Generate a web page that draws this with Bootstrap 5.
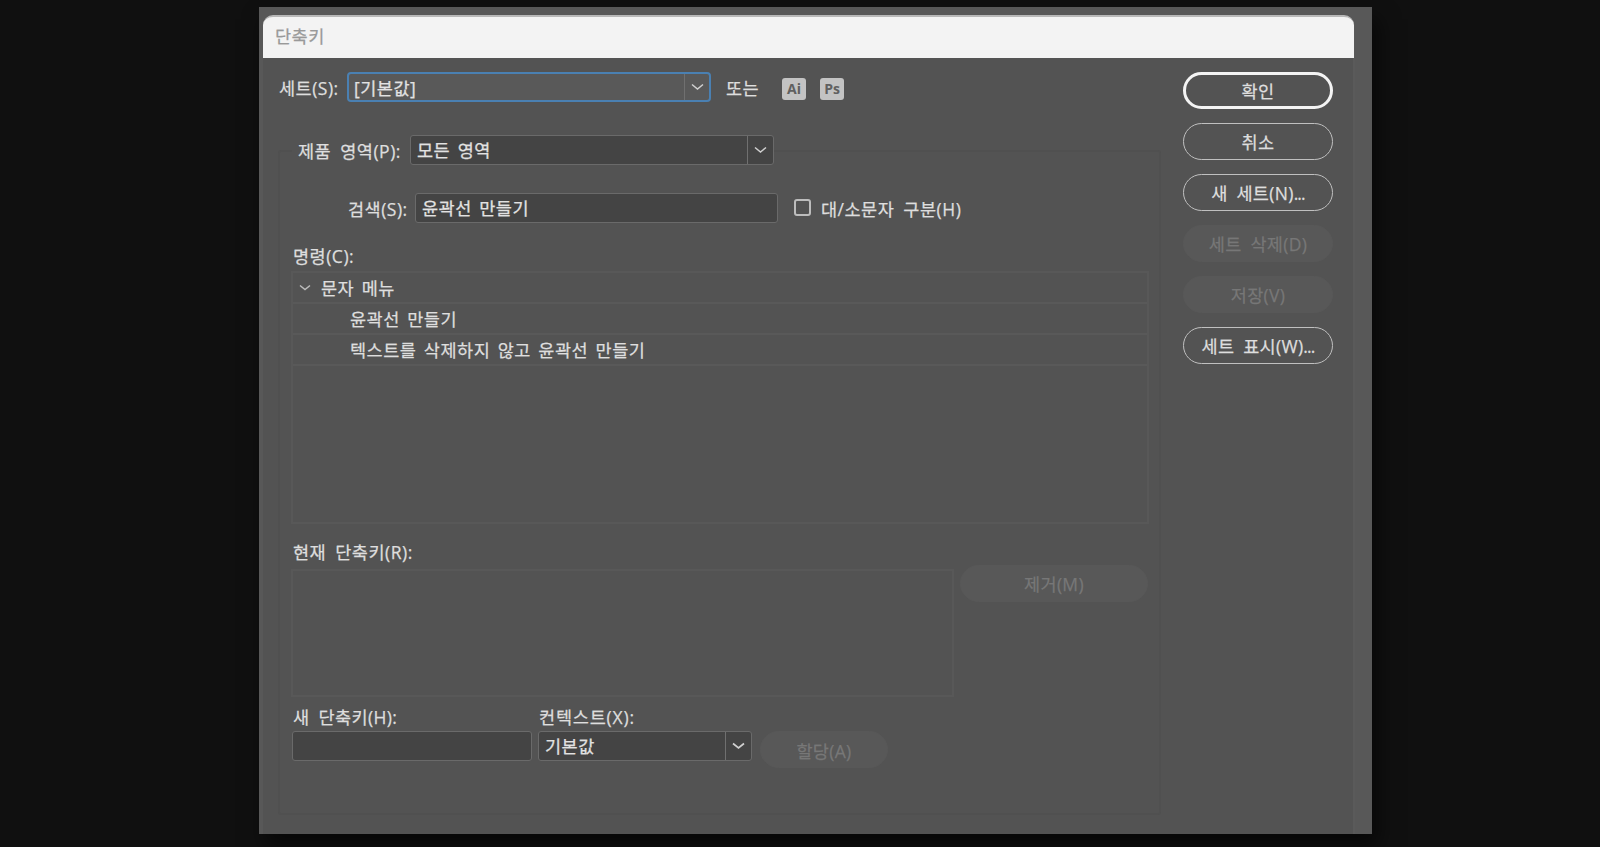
<!DOCTYPE html>
<html lang="ko">
<head>
<meta charset="utf-8">
<title>단축키</title>
<link href="https://cdn.jsdelivr.net/npm/bootstrap@5.3.0/dist/css/bootstrap.min.css" rel="stylesheet">
<style>
  body { width: 1600px; height: 847px; background: #101010; color: #dedede; overflow: hidden;
    font-family: "Open Sans", "Noto Sans CJK KR", sans-serif; font-size: 17.5px; line-height: 24px; padding: 7px 228px 0 259px; }
  .frame { height: 827px; background: #585858; padding: 8px 17px 0 4px; box-shadow: 6px 12px 20px 0 #00000090; }
  .dialog { height: 819px; background: #535353; border-right: 2px solid #5a5a5a; border-radius: 10px 10px 0 0; }
  .titlebar { height: 43px; background: #f3f3f3; border-top: 2px solid #b8b8b8; border-radius: 10px 10px 0 0; color: #999; padding: 0 0 4px 12px; margin-right: -1px; }
  .main-col { width: 883px; margin-left: 15px; }
  .txt { white-space: nowrap; letter-spacing: .5px; word-spacing: 4px; line-height: 24px; -webkit-text-stroke: .25px currentColor; }
  .list-text, .field .txt { word-spacing: 2.4px; }
  .set-row { height: 30px; margin-top: 14px; }
  .set-row > .txt { padding-top: 2px; }
  .legend-row > .txt, .search-row > .txt, .command .txt { padding-top: 1px; }
  .field { height: 30px; background: #444; border: 1.5px solid #6a6a6a; border-radius: 3px; color: #e2e2e2; flex: none; padding: 0 0 0 6px; }
  .field .txt { padding-top: 2px; }
  .field.focused { background: #595959; border: 2px solid #4a80b2; border-radius: 4px; padding-left: 5px; }
  .arrow { width: 26px; border-left: 1px solid #707070; }
  .focused .arrow { width: 25px; }
  .arrow svg { display: block; }
  .group-box { height: 665px; margin-top: 48px; border: 2px solid #505050; border-radius: 3px; }
  .legend-row { width: 482px; height: 30px; margin: -17px 0 0 12px; padding-left: 6px; background: #535353; }
  .search-row { height: 30px; margin: 28px 0 0 68px; }
  .check { width: 17px; height: 17px; border: 2px solid #bdbdbd; border-radius: 3px; margin: -2px 0 0 16px; }
  .inner { width: 859px; margin-left: 11px; }
  .panel-box { border: 2px solid #585858; }
  .commands { height: 253px; width: 858px; }
  .command { height: 31px; border-bottom: 2px solid #595959; }
  .pill { height: 37px; border-radius: 19px !important; font-size: inherit; padding: 2px 0 0; color: #dedede; border: 1.7px solid #c0c0c0; background: #535353; }
  .pill .txt { letter-spacing: .3px; }
  .pill.primary { border: 3px solid #f4f4f4; }
  .pill.off { color: #777; background: #585858; border-color: #585858; opacity: 1; }
  .side { width: 150px; margin: 14px 20px 0 0; gap: 14px; }
  .dots { letter-spacing: -.9px; }
  .app { width: 24px; height: 22px; border-radius: 3px; background: #c3c3c3; color: #606060; font: 700 14px/22px "Open Sans", sans-serif; margin-top: 3px; }
</style>
</head>
<body>
<div class="frame">
  <div class="dialog">
    <div class="titlebar d-flex align-items-center"><span class="txt">단축키</span></div>
    <div class="d-flex justify-content-between">
      <div class="main-col">
        <div class="set-row d-flex align-items-center">
          <span class="txt" style="width:69px;padding-left:1px">세트(S):</span>
          <div class="field focused d-flex align-items-stretch" style="width:364px">
            <span class="txt flex-grow-1">[기본값]</span>
            <span class="arrow d-flex align-items-center justify-content-center"><svg width="13" height="8" viewBox="0 0 13 8" fill="none" stroke="#d0d0d0" stroke-width="1.5"><path d="M1 1.5 6.5 6 12 1.5"/></svg></span>
          </div>
          <span class="txt" style="margin-left:15px;width:56px">또는</span>
          <span class="app text-center">Ai</span>
          <span class="app text-center" style="margin-left:14px">Ps</span>
        </div>

        <div class="group-box">
          <div class="legend-row d-flex align-items-center">
            <span class="txt" style="width:112px">제품 영역(P):</span>
            <div class="field d-flex align-items-stretch" style="width:364px">
              <span class="txt flex-grow-1">모든 영역</span>
              <span class="arrow d-flex align-items-center justify-content-center"><svg width="13" height="8" viewBox="0 0 13 8" fill="none" stroke="#d0d0d0" stroke-width="1.5"><path d="M1 1.5 6.5 6 12 1.5"/></svg></span>
            </div>
          </div>
          <div class="search-row d-flex align-items-center">
            <span class="txt" style="width:67px">검색(S):</span>
            <div class="field" style="width:363px"><span class="txt d-block">윤곽선 만들기</span></div>
            <span class="check"></span>
            <span class="txt" style="margin-left:10px">대/소문자 구분(H)</span>
          </div>
          <div class="inner">
            <div class="txt" style="margin:21px 0 3px 2px">명령(C):</div>
            <div class="commands panel-box">
              <div class="command d-flex align-items-center" style="padding-left:6px">
                <svg width="12" height="8" viewBox="0 0 12 8" fill="none" stroke="#bcbcbc" stroke-width="1.5"><path d="M1 1.5 6 5.5 11 1.5"/></svg>
                <span class="txt list-text" style="margin-left:10px">문자 메뉴</span>
              </div>
              <div class="command d-flex align-items-center" style="padding-left:57px"><span class="txt list-text">윤곽선 만들기</span></div>
              <div class="command d-flex align-items-center" style="padding-left:57px"><span class="txt list-text">텍스트를 삭제하지 않고 윤곽선 만들기</span></div>
            </div>
            <div class="txt" style="margin:16px 0 5px 2px">현재 단축키(R):</div>
            <div class="d-flex align-items-start">
              <div class="panel-box" style="width:663px;height:128px"></div>
              <button class="btn pill off" disabled style="width:188px;margin:-4px 0 0 6px"><span class="txt">제거(M)</span></button>
            </div>
            <div class="d-flex" style="margin-top:8px">
              <div style="width:247px"><div class="txt" style="margin-left:2px;letter-spacing:.4px">새 단축키(H):</div>
                <div class="field" style="width:240px;margin:2px 0 0 1px"></div></div>
              <div><div class="txt" style="margin-left:1px;letter-spacing:.8px">컨텍스트(X):</div>
                <div class="field d-flex align-items-stretch" style="width:214px;margin-top:2px">
                  <span class="txt flex-grow-1">기본값</span>
                  <span class="arrow d-flex align-items-center justify-content-center"><svg width="13" height="8" viewBox="0 0 13 8" fill="none" stroke="#d0d0d0" stroke-width="1.7"><path d="M1 1.5 6.5 6 12 1.5"/></svg></span>
                </div></div>
              <button class="btn pill off" disabled style="width:128px;margin:26px 0 0 8px;padding-top:4px"><span class="txt">할당(A)</span></button>
            </div>
          </div>
        </div>
      </div>
      <div class="side d-flex flex-column">
        <button class="btn pill primary"><span class="txt">확인</span></button>
        <button class="btn pill"><span class="txt">취소</span></button>
        <button class="btn pill"><span class="txt">새 세트(N)<span class="dots">...</span></span></button>
        <button class="btn pill off" disabled><span class="txt">세트 삭제(D)</span></button>
        <button class="btn pill off" disabled><span class="txt">저장(V)</span></button>
        <button class="btn pill"><span class="txt">세트 표시(W)<span class="dots">...</span></span></button>
      </div>
    </div>
  </div>
</div>
<script src="https://cdn.jsdelivr.net/npm/bootstrap@5.3.0/dist/js/bootstrap.bundle.min.js"></script>
</body>
</html>
